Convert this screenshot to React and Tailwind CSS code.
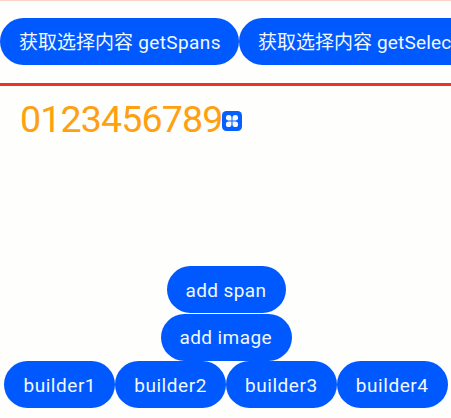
function Pill({ children, className = "" }) {
  return (
    <button
      className={`flex h-[47px] shrink-0 items-center rounded-full bg-[#0059ff] pt-px pl-[19px] text-left whitespace-nowrap text-[19px] leading-none text-[#f1f8ff] ${className}`}
    >
      <span>{children}</span>
    </button>
  );
}

function CloverIcon() {
  return (
    <svg className="mt-[11px] h-5 w-5 shrink-0" viewBox="0 0 20 20">
      <rect width="20" height="20" rx="4.5" fill="#075fff" />
      <g fill="#f5faff">
        <path d="M9.5 9.5H6.8A2.8 2.8 0 1 1 9.5 6.7Z" />
        <path d="M10.5 9.5V6.7A2.8 2.8 0 1 1 13.2 9.5Z" />
        <path d="M9.5 10.5V13.3A2.8 2.8 0 1 1 6.8 10.5Z" />
        <path d="M10.5 10.5H13.2A2.8 2.8 0 1 1 10.5 13.3Z" />
      </g>
    </svg>
  );
}

export default function App() {
  return (
    <div className="flex h-[418px] w-[451px] flex-col overflow-hidden border-t border-[#ffd3c8] bg-[#fefefd] font-[Roboto,'Noto_Sans_CJK_SC',sans-serif]">
      <div className="flex h-[82px] shrink-0 overflow-hidden pt-[17.4px]">
        <Pill className="w-[239px] pl-[18px]">获取选择内容<span className="tracking-[0.4px]"> getSpans</span></Pill>
        <Pill className="w-[270px]">获取选择内容<span className="tracking-[0.2px]"> getSelection</span></Pill>
      </div>
      <div className="flex h-[183px] shrink-0 items-start border-t-3 border-[#ee3420] pt-[14px] pl-5">
        <span className="-mt-px w-[202px] text-[37.5px] leading-[40px] tracking-[-0.83px] text-[#ffa010]">0123456789</span>
        <CloverIcon />
      </div>
      <div className="flex flex-col items-center gap-[0.5px] pl-px">
        <Pill className="w-[119px] tracking-[0.4px]">add span</Pill>
        <Pill className="w-[131px] tracking-[0.4px]">add image</Pill>
        <div className="flex">
          <Pill className="w-[110.8px] tracking-[0.55px]">builder1</Pill>
          <Pill className="w-[110.8px] tracking-[0.55px]">builder2</Pill>
          <Pill className="w-[110.8px] tracking-[0.55px]">builder3</Pill>
          <Pill className="w-[110.8px] tracking-[0.55px]">builder4</Pill>
        </div>
      </div>
    </div>
  );
}
